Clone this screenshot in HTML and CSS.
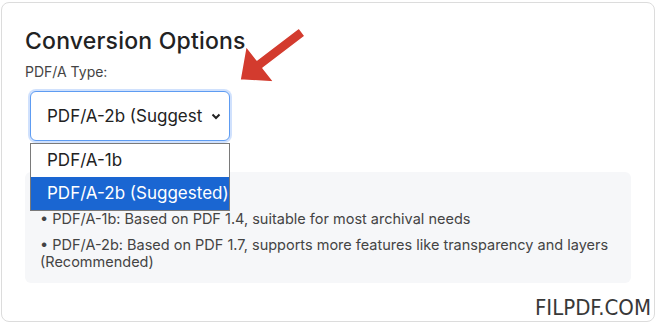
FILE: index.html
```html
<!DOCTYPE html>
<html lang="en">

<head>
  <meta charset="UTF-8">
  <meta name="viewport" content="width=device-width, initial-scale=1.0">
  <title>Conversion Options</title>
  <link rel="stylesheet" href="styles.css">
</head>

<body>
  <div class="card">
    <h2>Conversion Options</h2>
    <div class="label">PDF/A Type:</div>

    <div class="picker">
      <div class="select">
        <span>PDF/A-2b (Suggest</span>
        <svg class="chevron" width="10" height="7" viewBox="0 0 10 7">
          <polyline points="1.5,1.5 5,5 8.5,1.5" fill="none" stroke="#222" stroke-width="2" />
        </svg>
      </div>
      <ul class="options">
        <li>PDF/A-1b</li>
        <li class="active">PDF/A-2b (Suggested)</li>
      </ul>
    </div>

    <div class="info">
      <p>• PDF/A-1b: Based on PDF 1.4, suitable for most archival needs</p>
      <p>• PDF/A-2b: Based on PDF 1.7, supports more features like transparency and layers (Recommended)</p>
    </div>

    <div class="brand">FILPDF.COM</div>
  </div>

  <svg class="arrow" width="658" height="324" viewBox="0 0 658 324">
    <polygon points="240,80 274,82 263,68 305,36 299,28 257,60 246,46" fill="#d33b2e" stroke="#fff"
      stroke-width="1.5" stroke-linejoin="round" />
  </svg>
</body>

</html>
```

FILE: styles.css
```css
body {
  margin: 0;
  background: #fff;
  font-family: "Inter", "Open Sans", sans-serif;
  color: #333;
}

.card {
  position: relative;
  box-sizing: border-box;
  margin: 2px 3px 2px 1px;
  height: 320px;
  border: 1px solid #dcdcdc;
  border-radius: 8px;
  padding: 24px 22px 0 23px;
}

h2 {
  margin: 0;
  font-size: 23px;
  font-weight: 500;
  color: #222;
  letter-spacing: 0.2px;
}

.label {
  margin-top: 8px;
  font-size: 14px;
  color: #444;
}

.picker {
  position: relative;
  margin: 11px 0 0 5px;
  width: 200px;
}

.select {
  box-sizing: border-box;
  height: 50px;
  display: flex;
  align-items: center;
  justify-content: space-between;
  padding: 0 8px 0 16px;
  border: 1px solid #5e9cf2;
  border-radius: 6px;
  box-shadow: 0 0 0 2px rgba(120, 170, 250, 0.35);
  font-size: 17px;
  color: #222;
  background: #fff;
}

.options {
  position: absolute;
  top: 52px;
  left: 0;
  z-index: 2;
  box-sizing: border-box;
  width: 200px;
  margin: 0;
  padding: 0;
  list-style: none;
  border: 1px solid #7a7a7a;
  background: #fff;
}

.options li {
  height: 33px;
  line-height: 33px;
  padding-left: 16px;
  font-size: 17px;
  color: #222;
}

.options li.active {
  background: #1a66d2;
  color: #fff;
}

.info {
  margin-top: 31px;
  width: 606px;
  box-sizing: border-box;
  padding: 38px 12px 13px 15px;
  background: #f6f7f9;
  border-radius: 6px;
  font-size: 14.5px;
  line-height: 17px;
  color: #444;
}

.info p {
  margin: 0 0 9px;
}

.info p:last-child {
  margin-bottom: 0;
}

.brand {
  position: absolute;
  right: 3px;
  bottom: 1px;
  font-family: "DejaVu Sans Condensed", "DejaVu Sans", sans-serif;
  font-stretch: condensed;
  font-size: 22px;
  color: #383838;
}

.arrow {
  position: absolute;
  top: 0;
  left: 0;
  pointer-events: none;
}
```
